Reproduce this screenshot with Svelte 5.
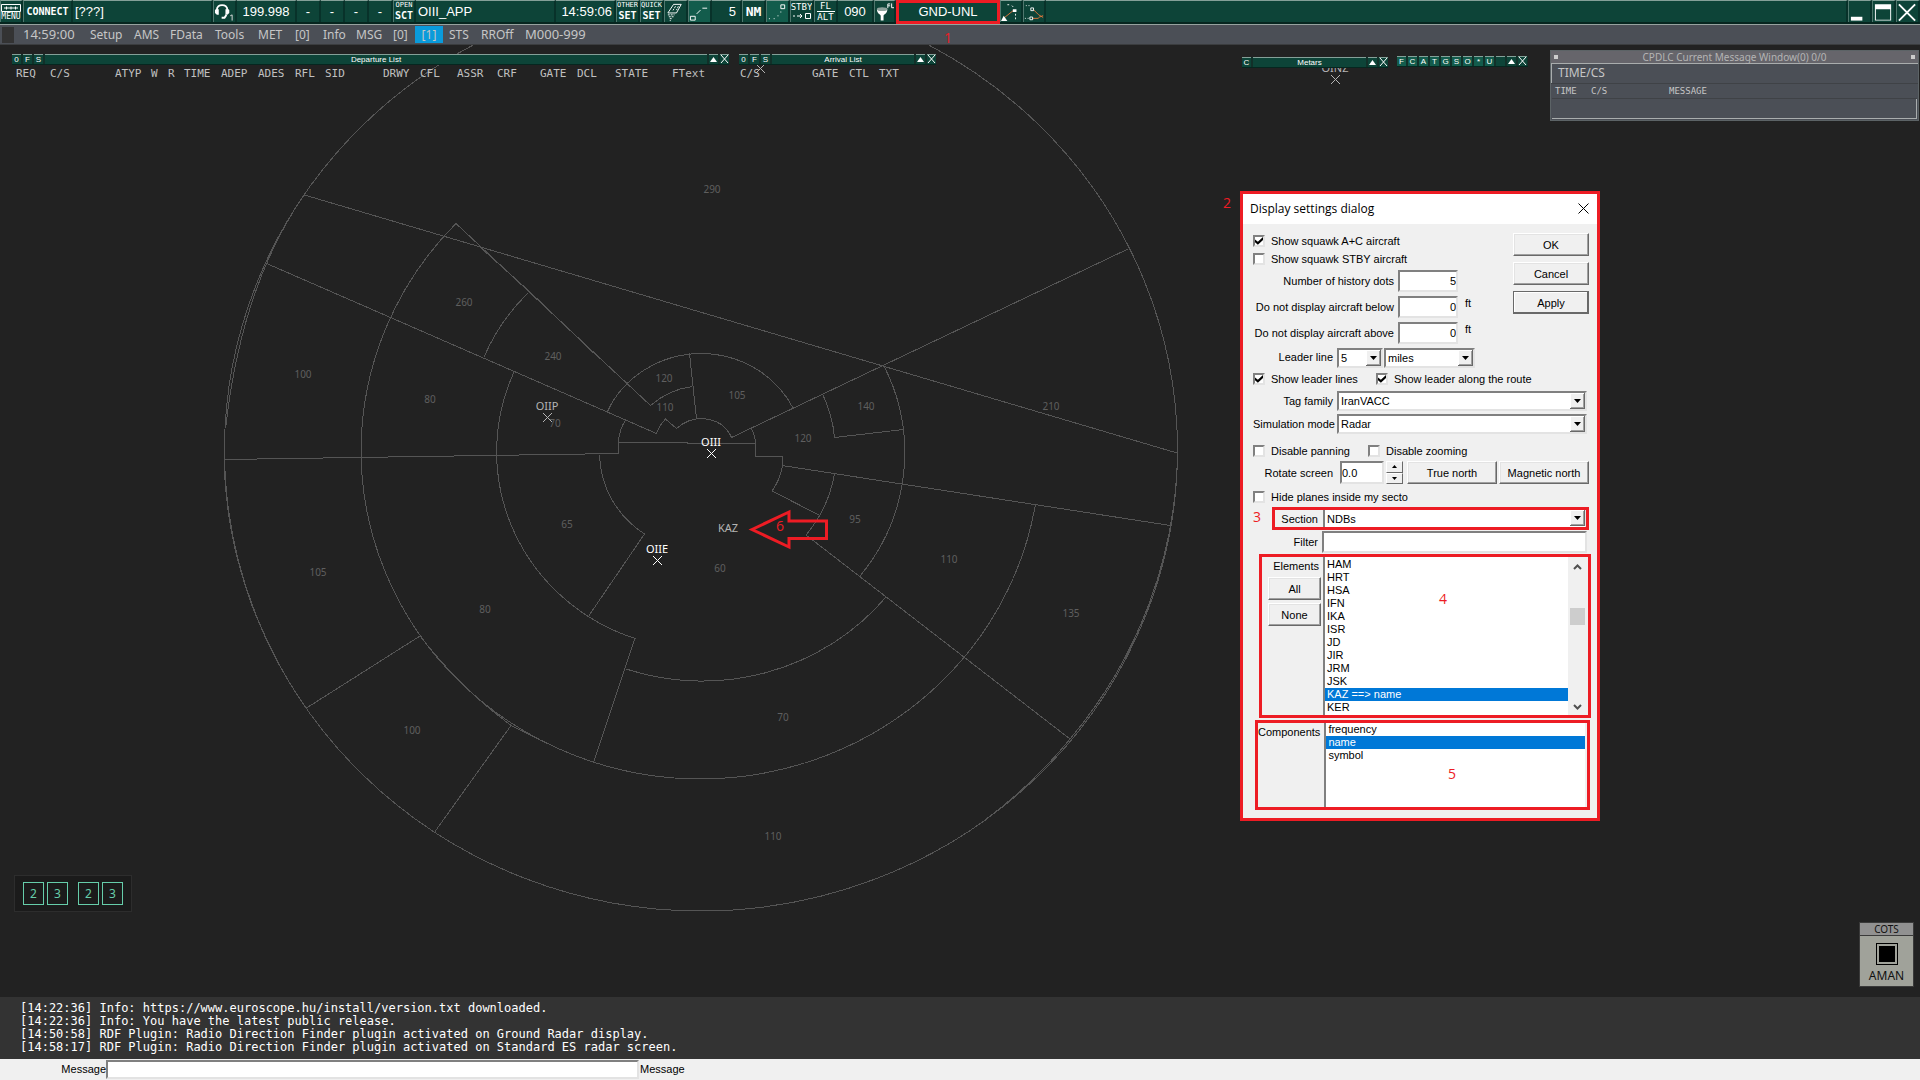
<script>
	// Width is the distance to the next cell.
	const menu = [
		{ text: 'Setup', width: 44 },
		{ text: 'AMS', width: 36 },
		{ text: 'FData', width: 45 },
		{ text: 'Tools', width: 43 },
		{ text: 'MET', width: 37 },
		{ text: '[0]', width: 28 },
		{ text: 'Info', width: 33 },
		{ text: 'MSG', width: 37 },
		{ text: '[0]', width: 22 },
		{ text: '[1]', width: 28, active: true },
		{ text: 'STS', width: 32 },
		{ text: 'RROff', width: 44 },
		{ text: 'M000-999', width: 70, digits: true }
	];

	const departures = [
		['REQ', 34],
		['C/S', 65],
		['ATYP', 36],
		['W', 17],
		['R', 16],
		['TIME', 37],
		['ADEP', 37],
		['ADES', 37],
		['RFL', 30],
		['SID', 58],
		['DRWY', 37],
		['CFL', 37],
		['ASSR', 40],
		['CRF', 43],
		['GATE', 37],
		['DCL', 38],
		['STATE', 57],
		['FText', 40]
	];
	const arrivals = [
		['C/S', 72],
		['GATE', 37],
		['CTL', 30],
		['TXT', 30]
	];

	const altitudes = [
		[712, 190, '290'],
		[464, 303, '260'],
		[553, 357, '240'],
		[303, 375, '100'],
		[430, 400, '80'],
		[555, 424, '70'],
		[567, 525, '65'],
		[318, 573, '105'],
		[664, 379, '120'],
		[665, 408, '110'],
		[737, 396, '105'],
		[803, 439, '120'],
		[866, 407, '140'],
		[1051, 407, '210'],
		[855, 520, '95'],
		[949, 560, '110'],
		[1071, 614, '135'],
		[720, 569, '60'],
		[783, 718, '70'],
		[773, 837, '110'],
		[412, 731, '100'],
		[485, 610, '80']
	];

	const airports = [
		{ name: 'OIIP', x: 547, y: 417, dim: true },
		{ name: 'OIII', x: 711, y: 453 },
		{ name: 'OIIE', x: 657, y: 560 },
		{ name: 'OINZ', x: 1335, y: 79, dim: true },
		{ name: '', x: 760, y: 68, dim: true }
	];

	const log = [
		'[14:22:36] Info: https://www.euroscope.hu/install/version.txt downloaded.',
		'[14:22:36] Info: You have the latest public release.',
		'[14:50:58] RDF Plugin: Radio Direction Finder plugin activated on Ground Radar display.',
		'[14:58:17] RDF Plugin: Radio Direction Finder plugin activated on Standard ES radar screen.'
	];

	const elements = ['HAM', 'HRT', 'HSA', 'IFN', 'IKA', 'ISR', 'JD', 'JIR', 'JRM', 'JSK', 'KAZ', 'KER'];
	const components = ['frequency', 'name', 'symbol'];

	let element = $state('KAZ');
	let component = $state('name');
</script>

{#snippet caret()}
	<svg class="caret" width="15" height="16" viewBox="0 0 15 16" aria-hidden="true">
		<rect width="15" height="16" fill="#696969" />
		<rect width="14" height="15" fill="#fff" />
		<rect x="1" y="1" width="13" height="14" fill="#a0a0a0" />
		<rect x="1" y="1" width="12" height="13" fill="#f0f0f0" />
		<path d="M4 6h7l-3.500 4z" fill="#000" />
	</svg>
{/snippet}

{#snippet winButtons()}
	<button class="key" aria-label="Collapse"><svg width="9" height="8" viewBox="0 0 9 8"><path d="M1 7l3.500-5L8 7z" fill="#fff" /></svg></button>
	<button class="key" aria-label="Close"><svg width="9" height="8" viewBox="0 0 9 8"><path d="M1 0l7 8M8 0L1 8" stroke="#fff" /></svg></button>
{/snippet}

<div class="app">
	<header class="toolbar">
		<button class="cell w23 menu-key">
			<svg width="20" height="8" viewBox="0 0 20 8">
				<path d="M.5 .5h19v7H.5zM3 4h14M5.500 2.500v3M10 2.500v3M14.500 2.500v3" fill="none" stroke="#fff" />
			</svg>
			<span class="tiny">MENU</span>
		</button>
		<button class="cell w50 strong">CONNECT</button>
		<div class="cell w140 left">[???]</div>
		<button class="cell w24" aria-label="Voice">
			<svg width="22" height="20" viewBox="0 0 22 20">
				<path d="M3 8C3 1 14 1 14 8" fill="none" stroke="#fff" stroke-width="2" />
				<path d="M2 7h3v6H3L1 11V8zM12 7h3l1 1v3l-2 2h-2z" fill="#fff" />
				<path d="M13 13l-2 3H8" fill="none" stroke="#fff" stroke-width="2" />
				<path d="M17 14l2-1v6" fill="none" stroke="#ddd" />
			</svg>
		</button>
		<div class="cell w60">199.998</div>
		<div class="cell w24">-</div>
		<div class="cell w24">-</div>
		<div class="cell w24">-</div>
		<div class="cell w24">-</div>
		<button class="cell w23 stack"><span class="tiny">OPEN</span><b>SCT</b></button>
		<div class="cell w140 left">OIII_APP</div>
		<div class="cell w60 right">14:59:06</div>
		<button class="cell w24 stack"><span class="tiny">OTHER</span><b>SET</b></button>
		<button class="cell w24 stack"><span class="tiny">QUICK</span><b>SET</b></button>
		<button class="cell w24" aria-label="Runway">
			<svg width="22" height="20" viewBox="0 0 22 20">
				<path d="M9 2h8l-5 9H3z" fill="none" stroke="#fff" />
				<path d="M11 4l-3 5M14 4l-2 4" stroke="#fff" stroke-dasharray="2 1" />
				<path d="M3 13h7M4 15h5M5 17h3M5 19h1" stroke="#fff" stroke-dasharray="2 1" />
			</svg>
		</button>
		<button class="cell w24 lit" aria-label="Leader line">
			<svg width="22" height="20" viewBox="0 0 22 20">
				<path d="M1.500 14.500h5v4h-5zM8 12l4-4M14 6h5" fill="none" stroke="#fff" />
			</svg>
		</button>
		<div class="cell w30 right five">5</div>
		<button class="cell w24 large">NM</button>
		<button class="cell w24 lit" aria-label="History dots">
			<svg width="22" height="20" viewBox="0 0 22 20">
				<path d="M14.500 2.500h4v4h-4z" fill="none" stroke="#fff" />
				<path d="M2 17h1M7 17h1M11 14h1M14 10h1" stroke="#fff" />
			</svg>
		</button>
		<button class="cell w24 stack">
			<span class="small">STBY</span>
			<svg width="20" height="9" viewBox="0 0 20 9">
				<path d="M1 4h2M5 4h5M8 2l2 2-2 2M13.500 1.500h5v5h-5z" fill="none" stroke="#fff" />
			</svg>
		</button>
		<button class="cell w24 stack"><span class="small">FL</span><i></i><span class="small">ALT</span></button>
		<div class="cell w36">090</div>
		<button class="cell w22" aria-label="Level filter">
			<svg width="20" height="20" viewBox="0 0 20 20">
				<path d="M2 7c0 5 4 5 4 7v5h3v-5c0-2 4-2 4-7z" fill="#fff" />
				<ellipse cx="7.500" cy="7" rx="5.500" ry="2" fill="#8fa39d" />
				<path d="M13.500 6V1.500H16M13.500 3.500H16M17.500 1v4.500H20" fill="none" stroke="#fff" />
			</svg>
		</button>
		<button class="cell w104 marked">GND-UNL</button>
		<button class="cell w23" aria-label="Vector">
			<svg width="22" height="20" viewBox="0 0 22 20">
				<path d="M4 16l10-8" stroke="#e8783c" />
				<path d="M0 20l3-6 4 6zM13 7h4v3h-4z" fill="#fff" />
				<path d="M7 2h3M12 3l2 2M16 12v8" stroke="#fff" stroke-dasharray="2 2" />
			</svg>
		</button>
		<button class="cell w23" aria-label="Route">
			<svg width="22" height="20" viewBox="0 0 22 20">
				<path d="M9 17h7M10 7l6 6 5 3M16 16l5-2" fill="none" stroke="#e8783c" />
				<path d="M7.500 5.500h3v3h-3zM6.500 15.500h3v3h-3z" fill="none" stroke="#fff" />
				<path d="M2 3h4M1 17h4" stroke="#fff" stroke-dasharray="1 2" />
			</svg>
		</button>
		<div class="cell grow"></div>
		<button class="cell w24" aria-label="Minimize">
			<svg width="22" height="20" viewBox="0 0 22 20"><rect x="2" y="15" width="12" height="4" fill="#fff" /></svg>
		</button>
		<button class="cell w24" aria-label="Restore">
			<svg width="22" height="20" viewBox="0 0 22 20">
				<path d="M2 2h17v17H2zM3 7v11h15V7z" fill="#fff" fill-rule="evenodd" />
			</svg>
		</button>
		<button class="cell w24" aria-label="Exit">
			<svg width="22" height="20" viewBox="0 0 22 20"><path d="M2 2l17 17M19 2L2 19" stroke="#fff" stroke-width="2" /></svg>
		</button>
	</header>

	<nav class="menubar">
		<span class="grip"></span>
		<span class="clock">14:59:00</span>
		{#each menu as item}
			<a href="#menu" class:active={item.active} class:digits={item.digits} style:width="{item.width}px">{item.text}</a>
		{/each}
	</nav>

	<main class="radar">
		<svg class="map" width="100%" height="100%" aria-label="Radar map">
			<g transform="translate(0 -45)">
				<g class="lines">
					<ellipse cx="701" cy="450" rx="476.500" ry="461" />
					<path d="M304 195Q242 285 226 425M224 460A478 461 0 0 0 306 708" />
					<path d="M1177.500 453A478 463 0 0 1 1070 739A478 463 0 0 1 985 820" />
					<path d="M456 223.500A340 329 0 0 0 361 450A340 329 0 0 0 701 779A340 329 0 0 0 1035.500 504" />
					<path d="M420 636Q462 690 512 726L540 740" />
					<path d="M514.500 371A203.500 197 0 0 0 635 638.500L593.500 762.500" />
					<path d="M626 669A238 230 0 0 0 886 597" />
					<path d="M884 366A203.500 197 0 0 1 860 576" />
					<path d="M822.500 394A136 131 0 0 1 834.500 437.500L903.500 429.500" />
					<path d="M834.500 473.500A136 131 0 0 1 806 535L1070 739" />
					<path d="M599.500 455A102 98 0 0 0 644.500 534L589 615.500" />
					<path d="M607 412.500A103 97 0 0 1 701 353.500A103 97 0 0 1 793 408" />
					<path d="M689.500 353.500L696.500 419M650.500 405.500Q670 389 692.500 386.500" />
					<path d="M304.500 195L1177 453M456 223.500L650.500 405.500M480 247L530 292L600 359" />
					<path d="M265.500 263L656.500 433.500Q659 426 665.500 419L676.500 428.500Q688 418.500 702 418.500Q724 420 731.500 437.500L1128 249" />
					<path d="M528.500 292.500Q500 320 484 357M884 365L760 424" />
					<path d="M225 459.500L618.500 453.500V442.500L755.500 443.500V456.500H782.500V466Q780 480 772 491L820 515.500" />
					<path d="M618.500 442.500Q619 430 625.500 420M755.500 443.500Q755 435 751 428" />
					<path d="M782 465.500L1170.500 525.500M306.500 708L420 636M435 831.500L511 725.500" />
				</g>
				{#each altitudes as [x, y, label]}
					<text class="altitude" {x} {y} dy="3">{label}</text>
				{/each}
				{#each airports as spot}
					<g class="airport" class:dim={spot.dim} transform="translate({spot.x} {spot.y})">
						<text y="-7">{spot.name}</text>
						<path d="M-4 -4l9 9M5 -4l-9 9" />
					</g>
				{/each}
				<text class="fix" x="728" y="532">KAZ</text>
				<path class="arrow" d="M752 529.500L789 512v9h37.500v17.500H789v8.500z" />
			</g>
		</svg>

		<section class="list departures">
			<div class="bar">
				<button class="key">0</button><button class="key">F</button><button class="key">S</button>
				<h2>Departure List</h2>
				{@render winButtons()}
			</div>
			<table>
				<thead>
					<tr>{#each departures as [name, width]}<th style:width="{width}px">{name}</th>{/each}</tr>
				</thead>
			</table>
		</section>

		<section class="list arrivals">
			<div class="bar">
				<button class="key">0</button><button class="key">F</button><button class="key">S</button>
				<h2>Arrival List</h2>
				{@render winButtons()}
			</div>
			<table>
				<thead>
					<tr>{#each arrivals as [name, width]}<th style:width="{width}px">{name}</th>{/each}</tr>
				</thead>
			</table>
		</section>

		<section class="list metars">
			<div class="bar">
				<button class="key">C</button>
				<h2>Metars</h2>
				{@render winButtons()}
			</div>
		</section>

		<div class="list filters">
			<div class="bar">
				{#each 'FCATGSO*U' as letter}<button class="key lit">{letter}</button>{/each}
				<span class="key"></span>
				{@render winButtons()}
			</div>
		</div>

		<section class="cpdlc">
			<h2><i></i><span>CPDLC Current Message Window(0) 0/0</span><i></i></h2>
			<div class="station">TIME/CS</div>
			<table>
				<thead><tr><th class="time">TIME</th><th class="sign">C/S</th><th>MESSAGE</th></tr></thead>
			</table>
			<div class="reply"></div>
		</section>

		<div class="pads">
			<button>2</button><button>3</button>
			<span></span>
			<button>2</button><button>3</button>
		</div>

		<section class="cots">
			<h2>COTS</h2>
			<button>
				<svg width="22" height="22" viewBox="0 0 22 22">
					<rect x=".5" y=".5" width="21" height="21" fill="none" stroke="#000" />
					<rect x="3" y="3" width="16" height="16" />
				</svg>
				AMAN
			</button>
		</section>

		<span class="note n1">1</span>
		<span class="note n2">2</span>
		<span class="note n6">6</span>

		<form class="dialog" onsubmit={(e) => e.preventDefault()}>
			<div class="title">
				<h1>Display settings dialog</h1>
				<button type="button" aria-label="Close">
					<svg width="11" height="11" viewBox="0 0 11 11"><path d="M.5 .5l10 10M10.500 .5l-10 10" stroke="#000" /></svg>
				</button>
			</div>

			<div class="body">
				<div class="actions">
					<button class="push">OK</button>
					<button class="push" type="button">Cancel</button>
					<button class="push default" type="button">Apply</button>
				</div>

				<div class="check"><label><input type="checkbox" checked />Show squawk A+C aircraft</label></div>
				<div class="check"><label><input type="checkbox" />Show squawk STBY aircraft</label></div>
				<div class="row number">
					<label for="dots">Number of history dots</label><input id="dots" value="5" />
				</div>
				<div class="row number">
					<label for="below">Do not display aircraft below</label><input id="below" value="0" /><span>ft</span>
				</div>
				<div class="row number">
					<label for="above">Do not display aircraft above</label><input id="above" value="0" /><span>ft</span>
				</div>
				<div class="row combo leader">
					<label for="leader">Leader line</label>
					<span class="select short"><select id="leader"><option>5</option></select>{@render caret()}</span>
					<span class="select medium">
						<select aria-label="Leader unit"><option>miles</option></select>{@render caret()}
					</span>
				</div>
				<div class="check tall">
					<label class="lines-check"><input type="checkbox" checked />Show leader lines</label>
					<label><input type="checkbox" checked />Show leader along the route</label>
				</div>
				<div class="row combo">
					<label for="family">Tag family</label>
					<span class="select"><select id="family"><option>IranVACC</option></select>{@render caret()}</span>
				</div>
				<div class="row combo">
					<label for="mode">Simulation mode</label>
					<span class="select"><select id="mode"><option>Radar</option></select>{@render caret()}</span>
				</div>
				<div class="check tall spaced">
					<label class="pan-check"><input type="checkbox" />Disable panning</label>
					<label><input type="checkbox" />Disable zooming</label>
				</div>
				<div class="row rotate">
					<label for="rotate">Rotate screen</label>
					<input id="rotate" value="0.0" />
					<span class="spinner">
						<button type="button" aria-label="Up"><svg width="5" height="3"><path d="M0 3h5L2.500 0z" /></svg></button>
						<button type="button" aria-label="Down"><svg width="5" height="3"><path d="M0 0h5L2.500 3z" /></svg></button>
					</span>
					<button class="push" type="button">True north</button>
					<button class="push" type="button">Magnetic north</button>
				</div>
				<div class="check tall hide"><label><input type="checkbox" />Hide planes inside my secto</label></div>

				<div class="framed section">
					<span class="note n3">3</span>
					<label for="section">Section</label>
					<span class="select"><select id="section"><option>NDBs</option></select>{@render caret()}</span>
				</div>
				<div class="row filter"><label for="filter">Filter</label><input id="filter" /></div>
				<div class="framed elements">
					<div class="side">
						<span>Elements</span>
						<button class="push" type="button">All</button>
						<button class="push" type="button">None</button>
					</div>
					<ul role="listbox" aria-label="Elements">
						{#each elements as name}
							<li role="option" aria-selected={element === name}>
								<button type="button" class:selected={element === name} onclick={() => (element = name)}>
									{name}{element === name ? ` ==> ${component}` : ''}
								</button>
							</li>
						{/each}
					</ul>
					<div class="scroll">
						<svg width="9" height="6" viewBox="0 0 9 6"><path d="M1 5l3.500-3.500L8 5" /></svg>
						<i></i>
						<svg width="9" height="6" viewBox="0 0 9 6"><path d="M1 1l3.500 3.500L8 1" /></svg>
					</div>
					<span class="note n4">4</span>
				</div>
				<div class="framed components">
					<div class="side"><span>Components</span></div>
					<ul role="listbox" aria-label="Components">
						{#each components as name}
							<li role="option" aria-selected={component === name}>
								<button type="button" class:selected={component === name} onclick={() => (component = name)}>
									{name}
								</button>
							</li>
						{/each}
					</ul>
					<span class="note n5">5</span>
				</div>
			</div>
		</form>
	</main>

	<div class="log">
		{#each log as line}<p>{line}</p>{/each}
	</div>

	<footer class="message">
		<label for="message">Message</label>
		<input id="message" />
		<span>Message</span>
	</footer>
</div>

<style>
	:global(body) {
		margin: 0;
		background: #222;
	}

	.app {
		--green: #0d4438;
		--lit: #135c4c;
		--edge: #84a098;
		--red: #ed1c24;
		--slate: #4b4f56;
		display: flex;
		flex-direction: column;
		min-height: 100vh;
		font-family: 'Liberation Sans', Arial, sans-serif;
		font-size: 11px;
	}

	.app * {
		box-sizing: border-box;
	}

	button,
	input,
	select {
		margin: 0;
		padding: 0;
		border: 0;
		border-radius: 0;
		background: none;
		color: inherit;
		font: inherit;
	}

	h1,
	h2,
	p,
	ul {
		margin: 0;
		padding: 0;
		font-weight: normal;
		list-style: none;
	}

	/* Toolbar */
	.toolbar {
		display: flex;
		height: 24px;
		border-bottom: 2px solid #06261f;
		background: var(--green);
		color: #fff;
		font-size: 13px;
	}

	.cell {
		display: flex;
		flex: none;
		align-items: center;
		justify-content: center;
		border-top: 1px solid var(--edge);
		border-right: 2px solid #08322a;
		overflow: hidden;
		white-space: nowrap;
	}

	button.cell {
		border-left: 1px solid #4f776d;
	}

	.cell.left {
		justify-content: flex-start;
		padding-left: 2px;
	}

	.cell.right {
		justify-content: flex-end;
		padding-right: 2px;
	}

	.cell.five {
		padding-right: 4px;
	}

	.cell.strong,
	.stack b {
		font: bold 10px 'DejaVu Sans Mono', monospace;
	}

	.cell.large {
		font: bold 13px 'DejaVu Sans Mono', monospace;
	}

	.stack,
	.menu-key {
		flex-direction: column;
		gap: 1px;
	}

	.stack b {
		line-height: 11px;
	}

	.stack i {
		width: 18px;
		border-top: 1px solid #fff;
	}

	.tiny {
		font: 7px/7px 'DejaVu Sans Mono', monospace;
	}

	.menu-key .tiny {
		font-size: 8px;
	}

	.small {
		font: 9px/8px 'DejaVu Sans Mono', monospace;
	}

	.cell.lit,
	.key.lit {
		background: var(--lit);
	}

	.w22 { width: 22px; }
	.w23 { width: 23px; }
	.w24 { width: 24px; }
	.w30 { width: 30px; }
	.w36 { width: 36px; }
	.w50 { width: 50px; }
	.w60 { width: 60px; }
	.w104 { width: 104px; }
	.w140 { width: 140px; }

	.grow {
		flex: 1;
	}

	button.marked {
		height: 24px;
		padding-bottom: 2px;
		border: 3px solid var(--red);
	}

	/* Menu bar */
	.menubar {
		display: flex;
		align-items: center;
		height: 21px;
		border-top: 1px solid #96a39f;
		border-bottom: 1px solid #3b3d3f;
		background: var(--slate);
		color: #c6c6c6;
		font: 12px/17px 'Noto Sans', sans-serif;
	}

	.grip {
		width: 12px;
		height: 16px;
		margin: 0 9px 0 2px;
		background: #333;
	}

	.clock {
		width: 67px;
	}

	.clock,
	.menubar .digits {
		font-size: 13px;
	}

	.menubar a {
		color: inherit;
		text-decoration: none;
		white-space: nowrap;
	}

	.menubar a.active {
		margin-right: 6px;
		background: #0a9bdb;
		text-align: center;
	}

	/* Radar canvas */
	.radar {
		position: relative;
		flex: 1;
		min-height: 780px;
		background: #222;
	}

	.map {
		position: absolute;
		inset: 0;
	}

	.lines {
		fill: none;
		stroke: #555;
		shape-rendering: crispEdges;
	}

	.altitude,
	.airport text,
	.fix {
		font: 11px 'Noto Sans', sans-serif;
		text-anchor: middle;
	}

	.altitude {
		fill: #5f5f5f;
		font-size: 10px;
	}

	.airport {
		fill: #fff;
		stroke: none;
	}

	.airport path {
		stroke: #fff;
	}

	.airport.dim,
	.fix {
		fill: #b4b4b4;
	}

	.airport.dim path {
		stroke: #b4b4b4;
	}

	.arrow {
		fill: none;
		stroke: var(--red);
		stroke-width: 3;
	}

	.note {
		position: absolute;
		color: var(--red);
		font: 14px/16px 'Open Sans', sans-serif;
	}

	.n1 { left: 944px; top: -15px; }
	.n2 { left: 1223px; top: 150px; }
	.n3 { left: -22px; top: -1px; }
	.n4 { left: 177px; top: 34px; }
	.n5 { left: 190px; top: 43px; }
	.n6 { left: 776px; top: 473px; }

	/* List windows */
	.list {
		position: absolute;
		color: #fff;
	}

	.departures { left: 12px; top: 9px; width: 717px; }
	.arrivals { left: 739px; top: 9px; width: 197px; }
	.metars { left: 1242px; top: 12px; width: 146px; }
	.filters { left: 1397px; top: 11px; width: 131px; }

	.bar {
		display: flex;
		gap: 2px;
		height: 11px;
		border-bottom: 1px solid #06261f;
		background: #123029;
		font-size: 8px;
		line-height: 9px;
	}

	.bar h2 {
		flex: 1;
		border-top: 1px solid var(--edge);
		background: var(--green);
		font-size: 8px;
		text-align: center;
	}

	.key {
		display: flex;
		flex: 0 0 9px;
		justify-content: center;
		border-top: 1px solid var(--edge);
		background: var(--green);
		line-height: 9px;
	}

	.list table {
		margin: 2px 0 0 4px;
		border-collapse: collapse;
		table-layout: fixed;
		color: #c0c0c0;
		font: 11px/13px 'DejaVu Sans Mono', monospace;
	}

	.arrivals table {
		margin-left: 1px;
	}

	th {
		padding: 0;
		font-weight: normal;
		text-align: left;
		white-space: nowrap;
	}

	/* CPDLC window */
	.cpdlc {
		position: absolute;
		top: 5px;
		right: 1px;
		width: 369px;
		border: 1px solid #5c6366;
		background: var(--slate);
		color: #c6c6c6;
		font: 11px/12px 'Noto Sans', sans-serif;
	}

	.cpdlc h2 {
		display: flex;
		align-items: center;
		justify-content: space-between;
		padding: 0 3px;
		background: #66656b;
		color: #b4b4b4;
		font-size: 10px;
	}

	.cpdlc i {
		width: 4px;
		height: 4px;
		background: #ccc;
	}

	.station {
		height: 20px;
		padding-left: 6px;
		border: 1px solid #a9adad;
		border-width: 1px 0 0 1px;
		font-size: 12px;
		line-height: 18px;
	}

	.cpdlc table {
		width: 100%;
		padding-left: 4px;
		border-top: 1px solid #3f4246;
		border-spacing: 0;
		table-layout: fixed;
		font: 9px/15px 'DejaVu Sans Mono', monospace;
	}

	.time { width: 36px; }
	.sign { width: 78px; }

	.reply {
		height: 20px;
		margin: 0 1px 1px;
		border: 1px solid #a9adad;
		border-width: 0 1px 1px 0;
		box-shadow: 0 -1px #3f4246;
	}

	/* Pads and COTS */
	.pads {
		position: absolute;
		bottom: 85px;
		left: 14px;
		display: flex;
		gap: 3px;
		padding: 6px 8px;
		border: 1px solid #2d2d2d;
		background: #1b1b1b;
	}

	.pads span {
		width: 4px;
	}

	.pads button {
		width: 21px;
		height: 23px;
		border: 1px solid #66cdaa;
		color: #66cdaa;
		font: 12px 'Noto Sans', sans-serif;
	}

	.cots {
		position: absolute;
		right: 6px;
		bottom: 10px;
		width: 55px;
		border: 1px solid #3a3a3a;
		background: #a0a29a;
		color: #111;
		font: 12px/16px 'Noto Sans', sans-serif;
		text-align: center;
	}

	.cots h2 {
		border-bottom: 1px solid #3a3a3a;
		background: #919191;
		font-size: 10px;
		line-height: 12px;
	}

	.cots button {
		display: flex;
		flex-direction: column;
		align-items: center;
		gap: 3px;
		width: 100%;
		padding: 7px 0 2px;
	}

	/* Settings dialog */
	.dialog {
		position: absolute;
		top: 146px;
		left: 1240px;
		width: 360px;
		border: 3px solid var(--red);
		background: #f0f0f0;
		color: #000;
	}

	.title {
		display: flex;
		align-items: center;
		justify-content: space-between;
		height: 30px;
		padding: 0 8px 2px 7px;
		background: #fff;
	}

	h1 {
		font: 12px 'Open Sans', sans-serif;
	}

	.title button {
		display: flex;
	}

	.body {
		position: relative;
		padding: 8px 8px 8px 10px;
	}

	.actions {
		float: right;
		display: flex;
		flex-direction: column;
		gap: 6px;
		width: 76px;
		margin-top: 1px;
	}

	.push {
		height: 23px;
		border: 1px solid;
		border-color: #fff #696969 #696969 #fff;
		background: #f0f0f0;
		box-shadow: inset -1px -1px #a0a0a0, inset 1px 1px #e3e3e3;
		text-align: center;
	}

	.default {
		border-color: #696969;
		box-shadow: inset -1px -1px #696969, inset 1px 1px #fff;
	}

	.check {
		display: flex;
		align-items: center;
		height: 18px;
	}

	.check.tall {
		height: 20px;
	}

	.spaced {
		margin-top: 6px;
	}

	.hide {
		margin-top: 3px;
	}

	.check label {
		display: flex;
		align-items: center;
		gap: 6px;
	}

	.lines-check {
		width: 123px;
	}

	.pan-check {
		width: 115px;
	}

	input[type='checkbox'] {
		width: 12px;
		height: 12px;
		border: 2px solid;
		border-color: #808080 #e3e3e3 #e3e3e3 #808080;
		background: #fff;
		appearance: none;
	}

	input[type='checkbox']:checked::after {
		content: '';
		display: block;
		width: 8px;
		height: 8px;
		background: #000;
		clip-path: polygon(0 32%, 36% 60%, 100% 0, 100% 36%, 36% 98%, 0 66%);
	}

	.row {
		display: flex;
		align-items: center;
	}

	.row > label {
		flex: none;
		text-align: right;
		white-space: nowrap;
	}

	.row input,
	.select {
		border: 2px solid;
		border-color: #808080 #e3e3e3 #e3e3e3 #808080;
		background: #fff;
	}

	.number {
		height: 26px;
		gap: 4px;
	}

	.number label {
		width: 141px;
	}

	.number input {
		width: 60px;
		height: 22px;
		text-align: right;
	}

	.number span {
		padding: 0 0 8px 3px;
	}

	.combo {
		height: 23px;
		gap: 4px;
	}

	.combo.leader {
		height: 23px;
		gap: 0;
	}

	.combo label {
		width: 80px;
	}

	.leader label {
		width: 84px;
		padding: 0 4px 2px 0;
	}

	.select {
		display: flex;
		flex: 1;
		height: 20px;
		margin-right: 2px;
	}

	.short {
		flex: 0 0 46px;
		margin: 0;
	}

	.medium {
		flex: 0 0 91px;
		margin-left: 1px;
	}

	.select select {
		flex: 1;
		min-width: 0;
		padding-left: 2px;
		appearance: none;
	}

	.caret {
		flex: none;
		pointer-events: none;
	}

	.rotate {
		height: 23px;
		gap: 2px;
	}

	.rotate label {
		width: 80px;
		margin-right: 5px;
	}

	.rotate input {
		width: 44px;
		height: 23px;
	}

	.rotate .push {
		width: 90px;
	}

	.spinner {
		display: grid;
		width: 17px;
		height: 23px;
		margin-right: 2px;
	}

	.spinner button {
		display: flex;
		align-items: center;
		justify-content: center;
		border: 1px solid;
		border-color: #fff #696969 #696969 #fff;
	}

	.framed {
		position: relative;
		display: flex;
		border: 3px solid var(--red);
	}

	.section {
		align-items: center;
		height: 23px;
		margin: 0 0 0 19px;
	}

	.section label {
		width: 43px;
		margin-right: 5px;
		text-align: right;
	}

	.section .select {
		height: 17px;
		margin: 0;
		border-width: 0 1px 0 2px;
	}

	.filter {
		gap: 4px;
		height: 23px;
	}

	.filter label {
		width: 65px;
	}

	.filter input {
		flex: 1;
		height: 22px;
		margin-right: 2px;
	}

	.elements {
		height: 164px;
		margin: 1px -2px 2px 6px;
	}

	.components {
		height: 90px;
		margin: 0 -1px 0 2px;
	}

	.side {
		display: flex;
		flex: 0 0 61px;
		flex-direction: column;
		gap: 3px;
		padding: 2px 0 0 6px;
	}

	.side span {
		padding-right: 4px;
		line-height: 15px;
		text-align: right;
	}

	.side .push {
		width: 53px;
	}

	.components .side {
		flex-basis: 64px;
		padding-left: 0;
	}

	.framed ul {
		flex: 1;
		border-left: 2px solid #808080;
		background: #fff;
	}

	li {
		height: 13px;
	}

	li button {
		width: 100%;
		height: 13px;
		padding-left: 2px;
		line-height: 13px;
		text-align: left;
	}

	li button.selected {
		background: #0078d7;
		color: #fff;
	}

	.elements ul {
		padding-top: 1px;
	}

	.components ul {
		margin-right: 2px;
	}

	.scroll {
		display: flex;
		flex: 0 0 18px;
		flex-direction: column;
		align-items: center;
		justify-content: space-between;
		margin-right: 2px;
		padding: 7px 0 5px;
	}

	.scroll i {
		width: 15px;
		height: 17px;
		margin-bottom: 42px;
		background: #cdcdcd;
	}

	.scroll path {
		fill: none;
		stroke: #505050;
		stroke-width: 2;
	}

	/* Log and message line */
	.log {
		padding: 5px 20px;
		background: #333;
		color: #fff;
		font: 12px/13px 'DejaVu Sans Mono', monospace;
	}

	.message {
		display: flex;
		align-items: center;
		height: 21px;
		background: #f0f0f0;
	}

	.message label {
		width: 106px;
		text-align: right;
	}

	.message label,
	.message span {
		padding-bottom: 2px;
	}

	.message input {
		width: 533px;
		height: 19px;
		margin-right: 1px;
		border: 2px solid;
		border-color: #808080 #e3e3e3 #e3e3e3 #808080;
		background: #fff;
	}
</style>
